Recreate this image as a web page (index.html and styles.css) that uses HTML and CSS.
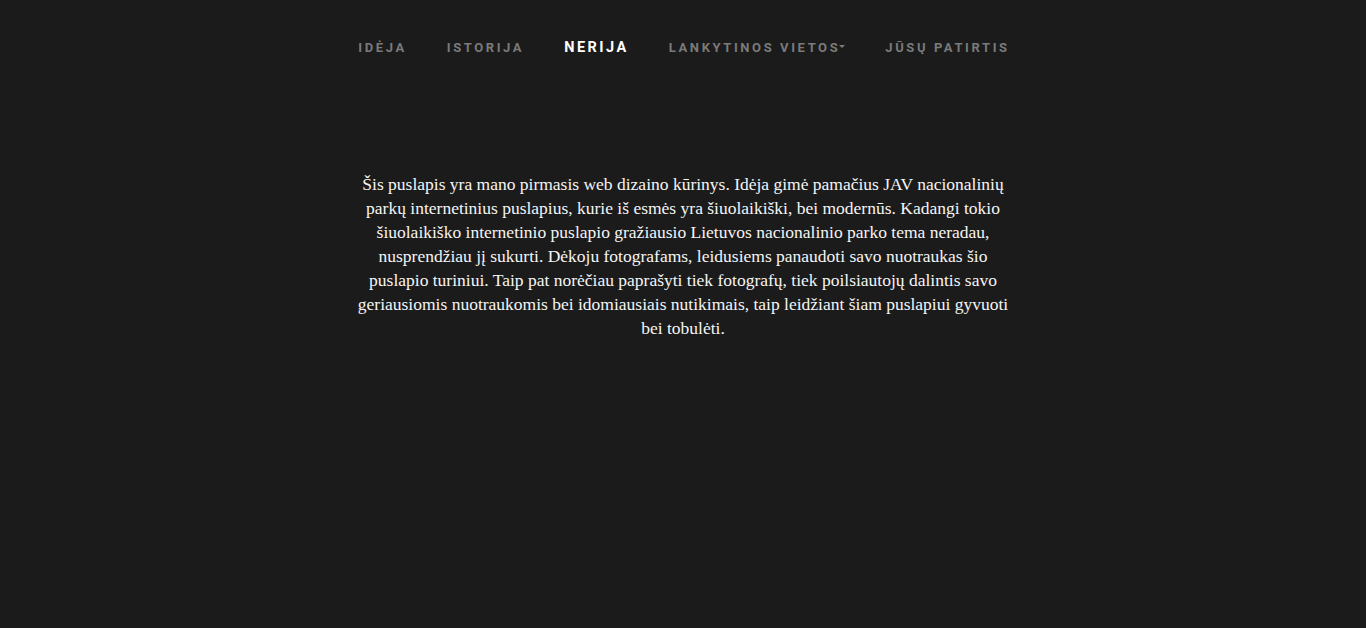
FILE: index.html
```html
<!DOCTYPE html>
<html lang="lt">
<head>
<meta charset="utf-8">
<title>Nerija</title>
<link rel="stylesheet" href="styles.css">
</head>
<body>
<nav class="nav">
  <a class="nav-link" href="#">Idėja</a>
  <a class="nav-link" href="#">Istorija</a>
  <a class="nav-link active" href="#">Nerija</a>
  <a class="nav-link dropdown" href="#">Lankytinos vietos<span class="caret"></span></a>
  <a class="nav-link" href="#">Jūsų patirtis</a>
</nav>
<main class="intro">
  <p>Šis puslapis yra mano pirmasis web dizaino kūrinys. Idėja gimė pamačius JAV nacionalinių parkų internetinius puslapius, kurie iš esmės yra šiuolaikiški, bei modernūs. Kadangi tokio šiuolaikiško internetinio puslapio gražiausio Lietuvos nacionalinio parko tema neradau, nusprendžiau jį sukurti. Dėkoju fotografams, leidusiems panaudoti savo nuotraukas šio puslapio turiniui. Taip pat norėčiau paprašyti tiek fotografų, tiek poilsiautojų dalintis savo geriausiomis nuotraukomis bei idomiausiais nutikimais, taip leidžiant šiam puslapiui gyvuoti bei tobulėti.</p>
</main>
</body>
</html>
```
FILE: styles.css
```css
html, body {
  margin: 0;
  padding: 0;
  background: #1b1b1b;
  height: 100%;
}
body {
  font-family: "Liberation Serif", "DejaVu Serif", serif;
}
.nav {
  display: flex;
  justify-content: center;
  align-items: center;
  padding-top: 37px;
  height: 20px;
}
.nav-link {
  font-family: Roboto, "Liberation Sans", sans-serif;
  font-weight: 700;
  font-size: 13px;
  letter-spacing: 2.6px;
  text-transform: uppercase;
  color: #7a7a7a;
  text-decoration: none;
  padding: 0 19px 0 21px;
  display: flex;
  align-items: center;
}
.nav-link.active {
  color: #ffffff;
  font-size: 14.5px;
  letter-spacing: 2.5px;
}
.caret {
  display: inline-block;
  width: 0;
  height: 0;
  border-left: 3px solid transparent;
  border-right: 3px solid transparent;
  border-top: 3px solid #7a7a7a;
  margin-left: -1px;
  margin-top: -2px;
}
.intro {
  width: 672px;
  margin: 0 auto;
  padding-top: 115px;
}
.intro p {
  margin: 0;
  text-align: center;
  color: #f5f5f5;
  font-size: 17.5px;
  line-height: 24px;
}
```
